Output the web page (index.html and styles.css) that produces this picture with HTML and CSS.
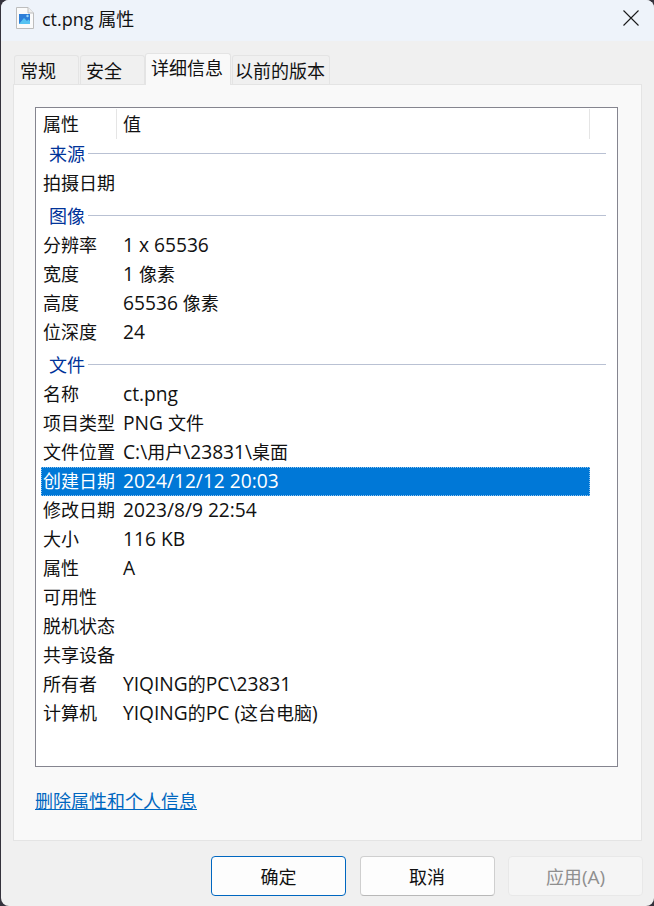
FILE: index.html
```html
<!DOCTYPE html>
<html lang="zh-CN">
<head>
<meta charset="utf-8">
<title>ct.png 属性</title>
<link rel="stylesheet" href="styles.css">
</head>
<body>
<div class="window">
  <header class="titlebar">
    <svg class="file-icon" width="20" height="24" viewBox="0 0 20 24">
      <path d="M1.5 1.5H13L18.5 7V22.5H1.5Z" fill="#fbfbfb" stroke="#bdbdbd"/>
      <path d="M13 1.5V7H18.5" fill="#eee" stroke="#bdbdbd"/>
      <rect x="4" y="8" width="11" height="10" fill="#2f7fd8"/>
      <path d="M4 18L9 12L12 15L13.5 13.5L15 15V18Z" fill="#57c3f2"/>
      <circle cx="12.5" cy="10" r="1.2" fill="#9ad8f7"/>
    </svg>
    <span class="title">ct.png <b>属性</b></span>
    <svg class="close" width="16" height="16" viewBox="0 0 16 16">
      <path d="M0.5 0.5L15.5 15.5M15.5 0.5L0.5 15.5" stroke="#1a1a1a" stroke-width="1.1" fill="none"/>
    </svg>
  </header>
  <nav class="tabs">
    <div class="tab w1">常规</div>
    <div class="tab w1">安全</div>
    <div class="tab active">详细信息</div>
    <div class="tab w3">以前的版本</div>
  </nav>
  <main class="panel">
    <section class="list">
      <div class="head">
        <span class="hc1">属性</span>
        <span class="hc2">值</span>
      </div>
      <div class="group first"><span>来源</span><i></i></div>
      <div class="row"><span class="k">拍摄日期</span><span class="v"></span></div>
      <div class="group"><span>图像</span><i></i></div>
      <div class="row"><span class="k">分辨率</span><span class="v">1 x 65536</span></div>
      <div class="row"><span class="k">宽度</span><span class="v">1 <b>像素</b></span></div>
      <div class="row"><span class="k">高度</span><span class="v">65536 <b>像素</b></span></div>
      <div class="row"><span class="k">位深度</span><span class="v">24</span></div>
      <div class="group"><span>文件</span><i></i></div>
      <div class="row"><span class="k">名称</span><span class="v">ct.png</span></div>
      <div class="row"><span class="k">项目类型</span><span class="v">PNG <b>文件</b></span></div>
      <div class="row"><span class="k">文件位置</span><span class="v">C:\<b>用户</b>\23831\<b>桌面</b></span></div>
      <div class="row selected"><span class="k">创建日期</span><span class="v">2024/12/12 20:03</span></div>
      <div class="row"><span class="k">修改日期</span><span class="v">2023/8/9 22:54</span></div>
      <div class="row"><span class="k">大小</span><span class="v">116 KB</span></div>
      <div class="row"><span class="k">属性</span><span class="v">A</span></div>
      <div class="row"><span class="k">可用性</span><span class="v"></span></div>
      <div class="row"><span class="k">脱机状态</span><span class="v"></span></div>
      <div class="row"><span class="k">共享设备</span><span class="v"></span></div>
      <div class="row"><span class="k">所有者</span><span class="v">YIQING<b>的</b>PC\23831</span></div>
      <div class="row"><span class="k">计算机</span><span class="v">YIQING<b>的</b>PC (<b>这台电脑</b>)</span></div>
    </section>
    <a class="link" href="#">删除属性和个人信息</a>
  </main>
  <footer class="buttons">
    <button class="btn primary">确定</button>
    <button class="btn">取消</button>
    <button class="btn disabled"><b>应用</b>(A)</button>
  </footer>
</div>
</body>
</html>
```
FILE: styles.css
```css
* { box-sizing: border-box; }
html, body { margin: 0; height: 100%; }
body {
  background: #34323c;
  font-family: "Open Sans", "Noto Sans CJK SC", sans-serif;
  font-size: 18px;
  color: #111;
  overflow: hidden;
}
b { font-weight: 400; font-size: 18px; }
.window {
  margin-left: 1px;
  height: 906px;
  background: #f0f0f0;
  border-radius: 8px;
  overflow: hidden;
}
.titlebar {
  height: 41px;
  background: #eef3fa;
  display: flex;
  align-items: center;
  padding: 0 15px 5px 14px;
}
.file-icon { margin-right: 7px; }
.title { flex: 1; font-size: 18px; margin-bottom: 1px; }
.tabs {
  display: flex;
  align-items: flex-end;
  height: 43px;
  padding-left: 13px;
  position: relative;
  z-index: 1;
}
.tab {
  height: 29px;
  background: #f0f0f0;
  border: 1px solid #e4e4e4;
  border-bottom: 0;
  border-radius: 3px 3px 0 0;
  line-height: 29px;
  text-align: center;
  margin-right: 1px;
}
.w1 { width: 65px; padding-left: 5px; text-align: left; line-height: 30px; }
.w3 { width: 98px; line-height: 30px; padding-right: 2px; }
.tab.active {
  width: 86px;
  height: 32px;
  background: #f9f9f9;
  margin-left: -1px;
  margin-bottom: -1px;
  line-height: 29px;
  padding-right: 2px;
}
.panel {
  margin: 0 12px 0 12px;
  height: 757px;
  background: #f9f9f9;
  border: 1px solid #e4e4e4;
  padding: 22px 23px 0 21px;
}
.list {
  height: 660px;
  background: #fff;
  border: 1px solid #85858f;
  padding: 1px 0 0 5px;
}
.head, .row { display: flex; }
.head { height: 30px; align-items: center; }
.hc1 {
  width: 76px;
  padding-left: 2px;
  height: 30px;
  line-height: 30px;
  border-right: 1px solid #e5e5e5;
}
.hc2 {
  width: 473px;
  padding-left: 6px;
  height: 30px;
  line-height: 30px;
  border-right: 1px solid #e5e5e5;
}
.group {
  display: flex;
  align-items: center;
  height: 30px;
  margin-top: 3px;
  padding: 0 11px 2px 8px;
  color: #003399;
}
.group span { margin-bottom: 1px; }
.group.first { margin-top: 0; }
.group i {
  flex: 1;
  height: 1px;
  margin-left: 3px;
  background: #b9c1d3;
}
.row {
  height: 29px;
  width: 549px;
  line-height: 29px;
}
.k { width: 82px; padding-left: 2px; }
.v { flex: 1; white-space: nowrap; font-size: 19.2px; line-height: 27px; }
.selected {
  background: #0078d7;
  color: #fff;
  outline: 1px dotted #8fc4f0;
  outline-offset: -1px;
}
.link {
  display: inline-block;
  margin-top: 21px;
  color: #0067c0;
  text-decoration: underline;
  line-height: 26px;
}
.buttons {
  display: flex;
  justify-content: flex-end;
  gap: 13.5px;
  padding: 15px 11px 0 0;
}
.btn {
  width: 135px;
  height: 40px;
  background: #fdfdfd;
  border: 1px solid #cfcfcf;
  border-bottom-color: #b8b8b8;
  border-radius: 4px;
  font: inherit;
  color: #111;
  padding: 0;
}
.primary { border: 1px solid #0067c0; }
.disabled {
  background: #f5f5f5;
  border: 1px solid #e8e8e8;
  color: #8f8f8f;
  font-size: 19px;
}
```
